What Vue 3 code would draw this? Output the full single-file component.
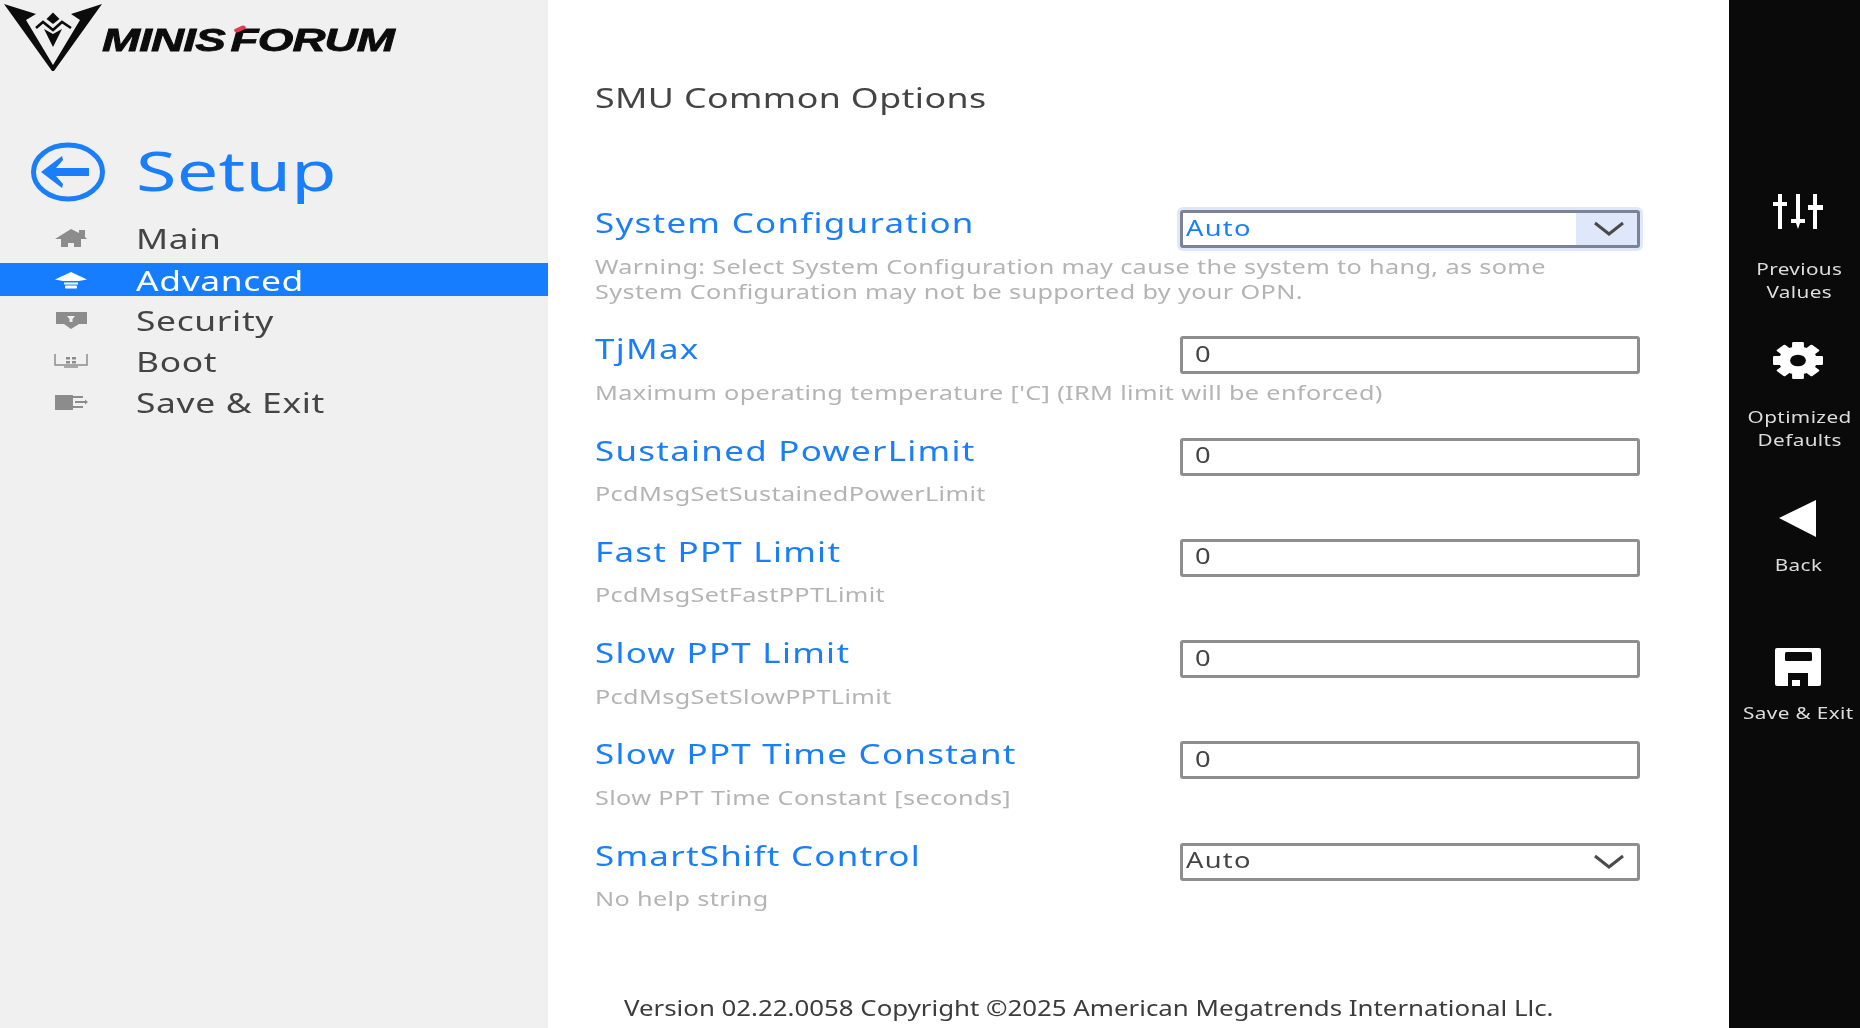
<script setup>
const nav = [
  { label: 'Main', icon: 'home' },
  { label: 'Advanced', icon: 'adv', active: true },
  { label: 'Security', icon: 'sec' },
  { label: 'Boot', icon: 'boot' },
  { label: 'Save & Exit', icon: 'exit' },
]
const rows = [
  { label: 'System Configuration', help: ['Warning: Select System Configuration may cause the system to hang, as some', 'System Configuration may not be supported by your OPN.'], type: 'select', value: 'Auto', focus: true },
  { label: 'TjMax', help: ["Maximum operating temperature ['C] (IRM limit will be enforced)"], type: 'input', value: '0' },
  { label: 'Sustained PowerLimit', help: ['PcdMsgSetSustainedPowerLimit'], type: 'input', value: '0' },
  { label: 'Fast PPT Limit', help: ['PcdMsgSetFastPPTLimit'], type: 'input', value: '0' },
  { label: 'Slow PPT Limit', help: ['PcdMsgSetSlowPPTLimit'], type: 'input', value: '0' },
  { label: 'Slow PPT Time Constant', help: ['Slow PPT Time Constant [seconds]'], type: 'input', value: '0' },
  { label: 'SmartShift Control', help: ['No help string'], type: 'select', value: 'Auto' },
]
</script>

<template>
  <div class="page">
    <aside class="side">
      <div class="logo">
        <svg class="mark" width="110" height="80" viewBox="0 0 110 80">
          <g fill="#0c0c0c">
            <path d="M4 4 L36 14 L26 20 L53 65 L80 20 L71 14 L102 4 L54 71 L52 71 Z" />
            <path d="M53 12.5 L59.5 19 L53 24 L46.5 19 Z" />
            <path d="M44 29 L53 34 L62 29 L60 33 L53 47 L46 33 Z" />
          </g>
          <path fill="none" stroke="#0c0c0c" stroke-width="2.6" d="M36 28 L43 22 L53 30 L62 22 L71 28" />
        </svg>
        <span class="word">MINIS<i class="slash"></i>FORUM</span>
      </div>
      <div class="setup">
        <svg width="76" height="60" viewBox="0 0 76 60">
          <ellipse cx="38" cy="30" rx="34.5" ry="27" fill="none" stroke="#1a7efb" stroke-width="5" />
          <path fill="#1a7efb" d="M11 30 L32 14 L33 18 L26 26 H59 V34 H26 L33 42 L32 46 Z" />
        </svg>
        <span>Setup</span>
      </div>
      <nav class="nav">
        <div v-for="n in nav" :key="n.label" class="nav-row" :class="{ active: n.active }">
          <svg class="nav-icon" width="34" height="20" viewBox="0 0 34 20">
            <g v-if="n.icon === 'home'">
              <path fill="#8c8c8c" d="M1 11 L17 1 L25 5 V2 H31 V9 L33 11 H27 V19 H20 V15 H14 V19 H7 V11 Z" />
            </g>
            <g v-else-if="n.icon === 'adv'" fill="#fff">
              <path d="M1 9.5 L17 2 L33 9.5 L25 11 H9 Z" />
              <rect x="10" y="12.5" width="14" height="2" />
              <rect x="11" y="15.5" width="12" height="3" rx="1" />
            </g>
            <g v-else-if="n.icon === 'sec'">
              <path fill="#8c8c8c" d="M2 2 H33 V14 L25 14 L17 19 L10 14 H2 Z" />
              <path fill="#f0f0f0" d="M13 6 H21 L18.5 9 V12 H15.5 V9 Z" />
            </g>
            <g v-else-if="n.icon === 'boot'">
              <path fill="none" stroke="#8c8c8c" stroke-width="1.5" d="M1 3 V14 H33 V3" />
              <rect x="12" y="6" width="4" height="2.5" fill="#8c8c8c" />
              <rect x="18" y="6" width="4" height="2.5" fill="#8c8c8c" />
              <rect x="12" y="10" width="4" height="2.5" fill="#8c8c8c" />
              <rect x="18" y="10" width="4" height="2.5" fill="#8c8c8c" />
              <rect x="10" y="15" width="14" height="2" fill="#a8a8a8" />
            </g>
            <g v-else fill="#8c8c8c">
              <rect x="1" y="3" width="18" height="15" />
              <path d="M19 4 H29 V6 H19 Z M19 14 H29 V16 H19 Z" />
              <path d="M21 9 H31 V7.5 L34 10 L31 12.5 V11 H21 Z" />
            </g>
          </svg>
          <span class="nav-text">{{ n.label }}</span>
        </div>
      </nav>
    </aside>

    <main class="main">
      <h1 class="title">SMU Common Options</h1>
      <section class="form">
        <div v-for="r in rows" :key="r.label" class="row">
          <div class="info">
            <div class="label">{{ r.label }}</div>
            <div class="help">
              <div v-for="h in r.help" :key="h">{{ h }}</div>
            </div>
          </div>
          <div class="ctrl" :class="[r.type, { focus: r.focus }]">
            <span class="val">{{ r.value }}</span>
            <span v-if="r.type === 'select'" class="arrow">
              <svg width="32" height="16" viewBox="0 0 32 16">
                <path d="M2 2 L16 13 L30 2" fill="none" stroke="#4a4a4a" stroke-width="3" />
              </svg>
            </span>
          </div>
        </div>
      </section>
      <footer class="ver">Version 02.22.0058 Copyright ©2025 American Megatrends International Llc.</footer>
    </main>

    <aside class="rail">
      <div class="act a1">
        <svg width="52" height="35" viewBox="0 0 52 35">
          <g fill="#fff">
            <path d="M6 0 H10 V8 H15 V12 H10 V35 H6 V12 H1 V8 H6 Z" />
            <path d="M24 0 H28 V25 H33 V29 H28 L26 35 L24 29 H19 V25 H24 Z" />
            <path d="M41 0 H45 V11 H51 V16 H45 V35 H41 V16 H36 V11 H41 Z" />
          </g>
        </svg>
        <div class="cap">Previous<br />Values</div>
      </div>
      <div class="act a2">
        <svg width="50" height="37" viewBox="-19 -19 38 38" preserveAspectRatio="none">
          <g fill="#fff">
            <circle r="14.5" />
            <g v-for="a in [0,45,90,135,180,225,270,315]" :key="a" :transform="`rotate(${a})`">
              <rect x="-4.5" y="-19" width="9" height="8" rx="1" />
            </g>
          </g>
          <circle r="6" fill="#0a0a0a" />
        </svg>
        <div class="cap">Optimized<br />Defaults</div>
      </div>
      <div class="act a3">
        <svg width="40" height="38" viewBox="0 0 40 38">
          <path fill="#fff" d="M1 18 L38 0 V37 Z" />
        </svg>
        <div class="cap">Back</div>
      </div>
      <div class="act a4">
        <svg width="46" height="38" viewBox="0 0 46 38">
          <rect width="46" height="38" rx="2" fill="#fff" />
          <rect x="10" y="4" width="27" height="9" rx="1.5" fill="#0a0a0a" />
          <rect x="13" y="25" width="20" height="13" fill="#0a0a0a" />
          <rect x="17" y="32" width="8" height="6" fill="#fff" />
        </svg>
        <div class="cap">Save &amp; Exit</div>
      </div>
    </aside>
  </div>
</template>

<style>
html, body { margin: 0; background: #fff; }
</style>

<style scoped>
.page {
  display: flex;
  width: 1860px;
  height: 1028px;
  overflow: hidden;
  font-family: "Noto Sans", "DejaVu Sans", sans-serif;
  background: #fff;
  filter: blur(0.45px);
}
.side {
  width: 548px;
  flex: none;
  background: #f0f0f0;
}
.logo {
  display: flex;
  align-items: flex-start;
  height: 72px;
}
.mark { flex: none; }
.word {
  margin-top: 20px;
  margin-left: -8px;
  display: flex;
  font-family: "Liberation Sans", sans-serif;
  font-weight: 700;
  font-style: italic;
  font-size: 32px;
  line-height: 40px;
  letter-spacing: -0.6px;
  color: #0c0c0c;
  -webkit-text-stroke: 0.8px #0c0c0c;
  transform: scaleX(1.43);
  transform-origin: 0 50%;
}
.slash {
  position: relative;
  width: 4px;
}
.slash::after {
  content: "";
  position: absolute;
  left: 6px;
  top: 7px;
  width: 9px;
  height: 4px;
  border-radius: 3px;
  background: #e8384f;
  transform: rotate(-35deg);
}
.setup {
  display: flex;
  align-items: center;
  margin-top: 71px;
  padding-left: 30px;
  height: 58px;
  color: #1a7efb;
  font-size: 55px;
  letter-spacing: 0.2px;
  line-height: 58px;
}
.setup span {
  margin-left: 30px;
  margin-top: -5px;
  transform: scaleX(1.34);
  transform-origin: 0 50%;
}
.nav { margin-top: 16px; }
.nav-row {
  display: flex;
  align-items: center;
  height: 41px;
  padding-left: 54px;
  color: #444;
  font-size: 28px;
  letter-spacing: 0.5px;
}
.nav-text {
  margin-left: 48px;
  transform: scaleX(1.265);
  transform-origin: 0 50%;
}
.nav-row.active {
  background: #167dff;
  color: #fff;
  height: 33px;
  margin: 5px 0 3px;
}
.nav-icon { flex: none; }
.main {
  flex: 1;
  min-width: 0;
  padding: 0 89px 0 47px;
  position: relative;
}
.title {
  margin: 81px 0 0;
  font-size: 27.5px;
  font-weight: 400;
  line-height: 34px;
  letter-spacing: 0.3px;
  color: #444;
  transform: scaleX(1.3);
  transform-origin: 0 50%;
}
.form { margin-top: 89px; }
.row {
  display: grid;
  grid-template-columns: 585px 460px;
  align-items: start;
  padding-bottom: 26.8px;
}
.label {
  font-size: 27.5px;
  line-height: 36px;
  padding-top: 1px;
  letter-spacing: 1px;
  color: #1a7efb;
  white-space: nowrap;
  transform: scaleX(1.27);
  transform-origin: 0 50%;
}
.help {
  margin-top: 12.5px;
  font-size: 20.5px;
  line-height: 25px;
  letter-spacing: 0.3px;
  color: #b4b4b4;
  white-space: nowrap;
  transform: scaleX(1.23);
  transform-origin: 0 50%;
}
.ctrl {
  position: relative;
  display: flex;
  align-items: center;
  box-sizing: border-box;
  width: 460px;
  height: 38px;
  margin-top: 6px;
  border: 3px solid #8e8e8e;
  border-radius: 3px;
  font-size: 21.5px;
  letter-spacing: 1px;
  line-height: 30px;
  color: #444;
  background: #fff;
}
.ctrl.input { padding-left: 12px; }
.ctrl.select { padding-left: 3px; }
.val {
  flex: 1;
  margin-top: -3px;
  transform: scaleX(1.27);
  transform-origin: 0 50%;
}
.arrow {
  flex: none;
  box-sizing: border-box;
  width: 61px;
  padding-left: 5px;
  height: 100%;
  display: flex;
  align-items: center;
  justify-content: center;
}
.ctrl.focus {
  color: #1a7efb;
  border-color: #7d8394;
  box-shadow: 0 0 0 3px #dfe8fa;
}
.ctrl.focus .arrow { background: #dfe8fa; }
.ver {
  position: absolute;
  left: 76px;
  top: 994px;
  font-size: 21px;
  line-height: 28px;
  color: #3c3c3c;
  white-space: nowrap;
  transform: scaleX(1.23);
  transform-origin: 0 50%;
}
.rail {
  width: 131px;
  flex: none;
  background: #0a0a0a;
  color: #ddd;
  position: relative;
}
.act {
  position: absolute;
  left: 0;
  box-sizing: border-box;
  width: 131px;
  padding-left: 7px;
  display: flex;
  flex-direction: column;
  align-items: center;
}
.a1 { top: 194px; }
.a2 { top: 342px; }
.a3 { top: 500px; }
.a4 { top: 648px; }
.a1 .cap { margin-top: 29px; margin-left: 3px; }
.a2 .cap { margin-top: 27px; margin-left: 3px; }
.a3 .cap { margin-top: 16px; margin-left: 2px; }
.a4 .cap { margin-top: 16px; }
.cap {
  text-align: center;
  font-size: 17px;
  line-height: 22.5px;
  letter-spacing: 0.3px;
  white-space: nowrap;
  margin-top: 15px;
  transform: scaleX(1.22);
}
</style>
